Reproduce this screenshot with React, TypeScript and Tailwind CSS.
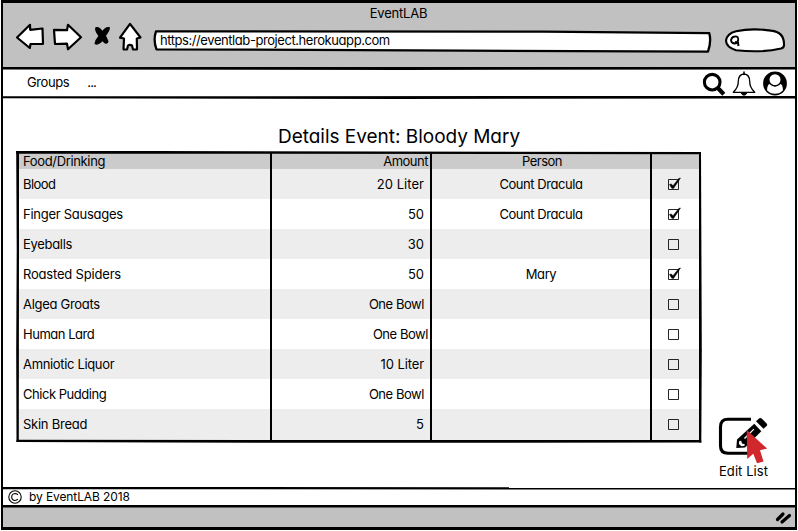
import React from "react";

type Item = {
  name: string;
  nameClass: string;
  amount: string;
  amountClass: string;
  person?: string;
  done?: boolean;
};

const items: Item[] = [
  { name: "Blood", nameClass: "tracking-[-0.55px]", amount: "20 Liter", amountClass: "pr-[6px] tracking-[0.05px]", person: "Count Dracula", done: true },
  { name: "Finger Sausages", nameClass: "tracking-[-0.27px]", amount: "50", amountClass: "pr-[6px]", person: "Count Dracula", done: true },
  { name: "Eyeballs", nameClass: "tracking-[-0.3px]", amount: "30", amountClass: "pr-[6px]" },
  { name: "Roasted Spiders", nameClass: "tracking-[-0.19px]", amount: "50", amountClass: "pr-[6px]", person: "Mary", done: true },
  { name: "Algea Groats", nameClass: "tracking-[-0.29px]", amount: "One Bowl", amountClass: "pr-[6px] tracking-[-0.45px]" },
  { name: "Human Lard", nameClass: "tracking-[-0.48px]", amount: "One Bowl", amountClass: "pr-[2px] tracking-[-0.45px]" },
  { name: "Amniotic Liquor", nameClass: "tracking-[-0.34px]", amount: "10 Liter", amountClass: "pr-[6px] tracking-[-0.1px]" },
  { name: "Chick Pudding", nameClass: "tracking-[-0.47px]", amount: "One Bowl", amountClass: "pr-[6px] tracking-[-0.45px]" },
  { name: "Skin Bread", nameClass: "tracking-[-0.25px]", amount: "5", amountClass: "pr-[6px]" },
];

/* A slightly wavy ruled line, three pixels tall. */
function Rule({ d, className }: { d: string; className: string }) {
  return (
    <svg width="792" height="3" viewBox="0 0 792 3" className={`block shrink-0 ${className}`}>
      <path d={d} />
    </svg>
  );
}

function NavIcons() {
  return (
    <svg width="128" height="32" viewBox="0 0 128 32" className="block" fill="#fff" stroke="#000" strokeWidth="2.2" strokeLinejoin="round" strokeLinecap="round">
      <path d="M2 15.5 L15 2.8 L15.2 7.8 L27.5 6.5 L28 21.8 L15.5 22 L14.8 26 Z" />
      <path d="M39 7.8 L52 8.2 L53 2.8 L66 15.2 L53 27.3 L52 21.7 L40 22 Z" />
      <path d="M81 5.5 Q84.5 5 87.3 9.5 Q91 4.800 94.300 5.600 Q94.500 9 90.300 13.500 L93 19.500 Q91.500 23.500 87.400 18.500 Q83 23.500 80 21.500 Q80.500 18 84 14 Q79.500 8 81 5.500Z" fill="#000" strokeWidth="1.1" />
      <path d="M115 1.8 L125.5 15.5 L121.8 16.5 L122 27.3 L118 27.5 L117 23.5 Q114.7 22.2 113 23.5 L112 27.5 L108.5 27.3 L109 16.5 L105 15.7 Z" />
    </svg>
  );
}

function Header() {
  return (
    <header className="flex h-[64px] flex-col bg-[#c1c1c1]">
      <div className="pr-[1px] pt-[1px] text-center text-[13px] leading-[18px]"><span className="tracking-[-0.2px]">EventLAB</span></div>
      <div className="flex h-[34px] items-start pl-[12px]">
        <NavIcons />
        <div className="relative ml-[10px] mt-[6px] h-[26px] w-[560px]">
          <svg width="560" height="26" className="absolute inset-0" viewBox="0 0 560 26">
            <path d="M3 3.3 L390 3.6 L556.3 5.2 Q558.5 14 555 23.6 L310 22.6 L3.5 21.3 Q0 12 3 3.3Z" fill="#fff" stroke="#000" strokeWidth="2.3" strokeLinejoin="round" />
          </svg>
          <span className="absolute left-[7px] top-[3px] whitespace-nowrap text-[13px] leading-[18px] tracking-[-0.43px]">https://eventlab-project.herokuapp.com</span>
        </div>
        <svg width="62" height="27" viewBox="0 0 62 27" className="ml-[11px] mt-[5px]" fill="none" stroke="#000" strokeWidth="2.1">
          <path d="M12 4.2 Q28 .8 47 3.6 Q60 5 60 17 Q60.5 20.5 57 21.5 Q38 26 12 23.2 Q2 20 2 13.5 Q3 6.5 12 4.2Z" fill="#fff" />
          <path d="M11 9.5 Q14.500 9 14.200 13 Q13.500 16.500 10.500 16.500 Q7 16 7 13 Q8 9.500 11 9.500Z" strokeWidth="1.8" />
          <path d="M11 15 L14 15.500 L14.500 19" strokeWidth="2" />
        </svg>
      </div>
    </header>
  );
}

function Toolbar() {
  return (
    <nav className="flex h-[26px] items-center bg-white pl-[24px] pr-[6px] text-[13px]">
      <span className="tracking-[-0.4px]">Groups</span>
      <span className="ml-[18px] tracking-[-0.9px]">...</span>
      <svg width="88" height="26" viewBox="0 0 88 26" className="relative z-10 ml-auto mt-[2px]" fill="none" stroke="#000">
        <circle cx="11.2" cy="11.2" r="7.8" strokeWidth="3.1" />
        <path d="M16.8 17 L22.8 23.2" strokeWidth="4.2" />
        <path d="M32.3 21.3 Q37.3 16.5 37.3 10.5 Q37.3 3.5 43 3 Q48.7 3.5 48.7 10.5 Q48.7 16.5 53.7 21.3 Z" strokeWidth="1.3" strokeLinejoin="round" />
        <path d="M43 .5 V3.5 M41 22.5 Q43 25.3 45 22.5Z" strokeWidth="1.5" fill="#000" />
        <circle cx="74" cy="12.5" r="11.9" fill="#000" stroke="none" />
        <circle cx="74" cy="8.7" r="5.5" fill="#fff" stroke="none" />
        <path d="M66 19.2 Q66.3 13 69.2 12.7 Q74 17.7 78.8 12.7 Q81.7 13 82 19.2 Q79 22.7 74 22.7 Q69 22.7 66 19.2Z" fill="#fff" stroke="none" />
        <path d="M69 12.9 Q74 17.3 79 12.9" strokeWidth="1.2" />
      </svg>
    </nav>
  );
}

function CheckBox({ done }: { done?: boolean }) {
  return (
    <svg width="16" height="15" viewBox="0 0 16 15" className="ml-[15px] mt-[7px]" fill="none" stroke="#000">
      <path d="M1.5 3.5 H11.5 V13.5 H1.5Z" strokeOpacity=".85" />
      {done && <path d="M2.5 8.5 L4.2 8 L6 9.7 L11.8 2.4 L13.500 2 L6.500 12.500 L4.800 12.300 Z" fill="#000" strokeWidth=".5" />}
    </svg>
  );
}

function ItemTable() {
  return (
    <section className="relative ml-[15px] w-[682px] text-[13px]">
      <div className="grid h-[16px] grid-cols-[254px_160px_220px_1fr] bg-[#cbcbcb] leading-[16px]">
        <span className="border-r-2 border-black pl-[5px] tracking-[-0.35px]">Food/Drinking</span>
        <span className="border-r-2 border-black pr-[2px] text-right tracking-[-0.5px]">Amount</span>
        <span className="border-r-2 border-black pl-[2px] text-center tracking-[-0.5px]">Person</span>
        <span />
      </div>
      {items.map((item) => (
        <div key={item.name} className="grid h-[30px] grid-cols-[254px_160px_220px_1fr] leading-[30px] odd:bg-white even:bg-[#ededed] last-of-type:h-[32px]">
          <span className={`border-r-2 border-black pl-[5px] ${item.nameClass}`}>{item.name}</span>
          <span className={`border-r-2 border-black text-right ${item.amountClass}`}>{item.amount}</span>
          <span className="border-r-2 border-black text-center tracking-[-0.43px]">{item.person}</span>
          <span className="flex items-start"><CheckBox done={item.done} /></span>
        </div>
      ))}
      <svg width="688" height="294" viewBox="0 0 688 294" className="pointer-events-none absolute -left-[3px] -top-[3px]">
        <path d="M1.2 1 L140 1 L686 2 L686 4.3 L140 3.7 L1.2 3.7Z" />
        <path d="M1.2 1 L4 1 L4 100 L3.8 290 L4 292 L1.5 292 L1.2 200 L1.7 100Z" />
        <path d="M684 2.5 L686 2.5 L686.8 200 L686.3 292.5 L684 292.5 L684 100Z" />
        <path d="M1.5 289.7 L300 290 L686 290 L686.5 292.5 L300 292.8 L150 292.5 L1.5 292Z" />
      </svg>
    </section>
  );
}

function EditButton() {
  return (
    <button className="absolute left-[712px] top-[316px] flex w-[58px] flex-col items-center text-[13px]">
      <svg width="56" height="50" viewBox="0 0 56 50" fill="none">
        <path d="M35 4.2 H12 Q4.500 4.200 4.500 12 V31 Q4.500 38.200 12 38.200 H32" stroke="#000" strokeWidth="3.1" />
        <path d="M20.3 33 L21 24.5 L38.3 8.7 L45.3 16.3 L29 32.5 Z" fill="#000" />
        <path d="M23.3 26 L25.2 25.8 L26 28.6 L28.8 29.2 L28.500 30.700 L25.500 31.200 L22.900 29Z" fill="#fff" />
        <path d="M28 23 L37.5 13.7 L38.3 14.5 L29 24Z" fill="#fff" />
        <path d="M40 6.2 L43.3 3.300 Q44.500 2.500 45.700 3.500 L50.800 8.800 Q51.500 9.700 50.800 10.700 L47.500 13.800Z" fill="#000" />
        <path d="M30.700 15 L51.200 33.600 L44 35.300 L47.500 46.500 L41 48.200 L37.300 38.700 L31.200 44Z" fill="#d1282d" />
      </svg>
      <span className="-ml-[1px] -mt-[2px] whitespace-nowrap leading-[16px] tracking-[0.06px]">Edit List</span>
    </button>
  );
}

export default function App() {
  return (
    <div className="h-[531px] w-[798px] overflow-hidden bg-white px-[1px] pb-[1px] font-['Inter',sans-serif] text-black [font-feature-settings:'cv11']">
      <div className="flex h-[530px] flex-col border-x-2 border-b-[3px] border-t-[3px] border-black">
        <Header />
        <Rule className="bg-white" d="M0 0 L792 0 L792 2.5 L400 3 L0 2.6Z" />
        <Toolbar />
        <Rule className="bg-white" d="M0 .2 L792 0 L792 2.5 L400 3 L0 2.3Z" />
        <main className="relative h-[388px] bg-white pt-[25px]">
          <h1 className="mb-[3px] h-[26px] pl-[275px] text-[19px] leading-[26px] tracking-[-0.02px]">Details Event: Bloody Mary</h1>
          <ItemTable />
          <EditButton />
        </main>
        <Rule className="bg-white" d="M0 0 L792 .2 L792 2.5 L0 2.3Z" />
        <footer className="flex h-[15px] items-center bg-white pl-[5px] text-[12px]">
          <svg width="14" height="14" viewBox="0 0 14 14" className="-mt-[1px]" fill="none" stroke="#000" strokeWidth="1.1">
            <circle cx="7" cy="7" r="6.2" />
            <path d="M9.9 4.8 Q8.8 3.5 7 3.5 Q3.7 3.8 3.7 7 Q3.7 10.2 7 10.5 Q8.8 10.5 9.9 9.2" />
          </svg>
          <span className="-mt-[2px] ml-[7px] leading-[15px] tracking-[-0.1px]">by EventLAB 2018</span>
        </footer>
        <Rule className="bg-[#c1c1c1]" d="M0 0 L792 0 L792 2.4 L0 2.6Z" />
        <div className="flex flex-1 items-center justify-end bg-[#c1c1c1] pr-[3px]">
          <svg width="17" height="15" viewBox="0 0 17 15" stroke="#000" strokeWidth="3.2" strokeLinecap="round">
            <path d="M2.5 9.5 L8 4 M7 12 L14.5 5.5" />
          </svg>
        </div>
      </div>
    </div>
  );
}
